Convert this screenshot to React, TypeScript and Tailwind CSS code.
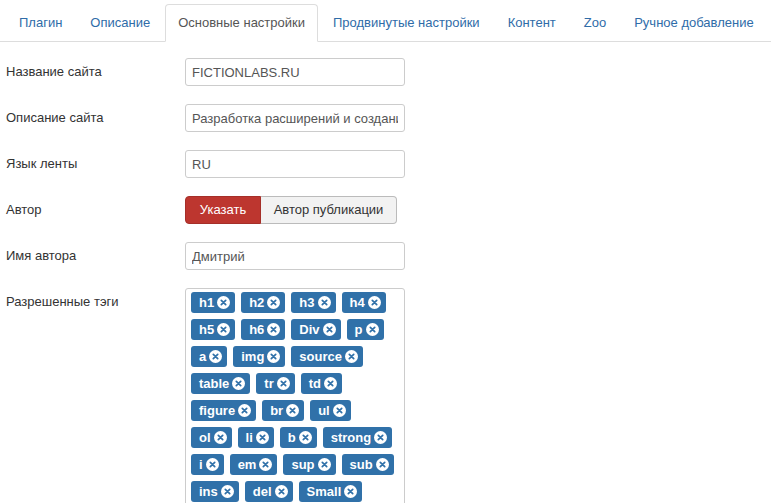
const tabs = [
  "Плагин",
  "Описание",
  "Основные настройки",
  "Продвинутые настройки",
  "Контент",
  "Zoo",
  "Ручное добавление",
];

const tags = [
  "h1", "h2", "h3", "h4", "h5", "h6", "Div", "p", "a", "img", "source",
  "table", "tr", "td", "figure", "br", "ul", "ol", "li", "b", "strong",
  "i", "em", "sup", "sub", "ins", "del", "Small",
];

const RemoveIcon = () => (
  <svg width="13" height="13" viewBox="0 0 13 13" className="shrink-0">
    <circle cx="6.5" cy="6.5" r="6.5" fill="#fff" />
    <path d="M4.3 4.3 L8.7 8.7 M8.7 4.3 L4.3 8.7" stroke="#3071a9" strokeWidth="1.7" strokeLinecap="round" />
  </svg>
);

const Field = ({ label, children }: { label: string; children: React.ReactNode }) => (
  <div className="flex items-start mb-[18px]">
    <label className="w-[179px] shrink-0 leading-[28px] text-[13px] text-[#333]">{label}</label>
    {children}
  </div>
);

const TextInput = ({ value }: { value: string }) => (
  <input
    readOnly
    value={value}
    className="w-[220px] h-[28px] border border-[#ccc] rounded-[3px] px-[6px] text-[13px] text-[#555] bg-white outline-none"
  />
);

export default function App() {
  return (
    <div className="w-[771px] h-[503px] overflow-hidden bg-white" style={{ fontFamily: '"Liberation Sans", Arial, sans-serif' }}>
      <ul className="flex pl-[6px] pt-[4px] border-b border-[#ddd] h-[42px]">
        {tabs.map((t, i) => (
          <li key={t} className="mr-[2px] -mb-px">
            {i === 2 ? (
              <span className="block h-[38px] px-[12px] leading-[36px] text-[13px] text-[#555] bg-white border border-[#ddd] border-b-white rounded-t-[4px]">
                {t}
              </span>
            ) : (
              <span className="block h-[38px] px-[12px] leading-[36px] text-[13px] text-[#2f6ca8] border border-transparent">
                {t}
              </span>
            )}
          </li>
        ))}
      </ul>

      <div className="pl-[6px] pt-[16px]">
        <Field label="Название сайта">
          <TextInput value="FICTIONLABS.RU" />
        </Field>
        <Field label="Описание сайта">
          <TextInput value="Разработка расширений и создание сайтов" />
        </Field>
        <Field label="Язык ленты">
          <TextInput value="RU" />
        </Field>
        <Field label="Автор">
          <div className="flex h-[28px] text-[13px]">
            <button className="h-full w-[76px] bg-[#bd362f] text-white rounded-l-[4px] border border-[#a52f29]">Указать</button>
            <button className="h-full w-[136px] bg-[#f2f2f2] text-[#333] rounded-r-[4px] border border-[#bbb] border-l-0">Автор публикации</button>
          </div>
        </Field>
        <Field label="Имя автора">
          <TextInput value="Дмитрий" />
        </Field>
        <Field label="Разрешенные тэги">
          <div className="w-[220px] border border-[#ccc] rounded-[3px] pl-[5px] pr-[10px] pt-[3px] pb-[6px] flex flex-wrap gap-x-[6px] gap-y-[6px]">
            {tags.map((t) => (
              <span key={t} className="flex items-center gap-[3px] h-[21px] pl-[8px] pr-[5px] rounded-[3px] bg-[#3071a9] text-white text-[13px] font-bold">
                {t}
                <RemoveIcon />
              </span>
            ))}
          </div>
        </Field>
      </div>
    </div>
  );
}
